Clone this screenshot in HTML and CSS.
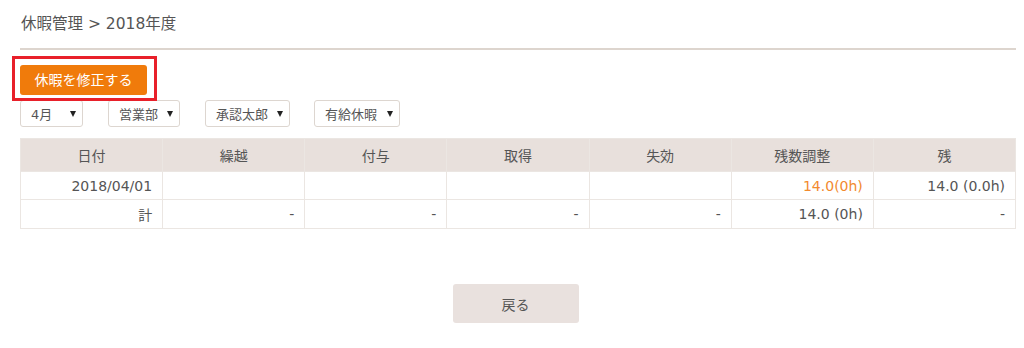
FILE: index.html
```html
<!DOCTYPE html>
<html lang="ja">
<head>
<meta charset="utf-8">
<title>休暇管理</title>
<link rel="stylesheet" href="styles.css">
</head>
<body>
<div class="page">
  <h1 class="title">休暇管理 &gt; 2018年度</h1>
  <div class="toolbar">
    <button class="btn-edit" type="button">休暇を修正する</button>
    <div class="highlight"></div>
  </div>
  <div class="filters">
    <div class="select select-month"><span>4月</span><i class="arrow"></i></div>
    <div class="select select-dept"><span>営業部</span><i class="arrow"></i></div>
    <div class="select select-person"><span>承認太郎</span><i class="arrow"></i></div>
    <div class="select select-type"><span>有給休暇</span><i class="arrow"></i></div>
  </div>
  <table class="grid">
    <thead>
      <tr class="head">
        <th>日付</th><th>繰越</th><th>付与</th><th>取得</th><th>失効</th><th>残数調整</th><th>残</th>
      </tr>
    </thead>
    <tbody>
      <tr class="row1">
        <td>2018/04/01</td><td></td><td></td><td></td><td></td><td class="adj">14.0(0h)</td><td>14.0 (0.0h)</td>
      </tr>
      <tr class="row2">
        <td>計</td><td>-</td><td>-</td><td>-</td><td>-</td><td>14.0 (0h)</td><td>-</td>
      </tr>
    </tbody>
  </table>
  <div class="footer">
    <button class="btn-back" type="button">戻る</button>
  </div>
</div>
</body>
</html>
```

FILE: styles.css
```css
* { box-sizing: border-box; }
html, body { margin: 0; padding: 0; background: #fff; }
body {
  font-family: "DejaVu Sans", "Noto Sans CJK JP", sans-serif;
  color: #555;
}
.page {
  padding: 0 8px 0 20px;
  width: 1024px;
}
.title {
  margin: 0;
  padding: 14px 0 14px 1px;
  font-size: 15.5px;
  font-weight: normal;
  line-height: 20px;
  color: #555;
  border-bottom: 2px solid #ddd5ce;
}
.toolbar {
  position: relative;
  margin-top: 15px;
  height: 30px;
}
.btn-edit {
  display: block;
  width: 127px;
  height: 30px;
  border: 0;
  border-radius: 3px;
  background: #f07b0b;
  color: #fff;
  font-family: inherit;
  font-size: 14px;
  padding: 0;
  line-height: 30px;
}
.highlight {
  position: absolute;
  left: -8px;
  top: -9px;
  width: 145px;
  height: 45px;
  border: 3px solid #e8202a;
}
.filters {
  display: flex;
  gap: 25px;
  margin-top: 5px;
  height: 27px;
}
.select {
  display: flex;
  align-items: center;
  justify-content: space-between;
  height: 27px;
  padding: 0 6px 0 10px;
  border: 1px solid #ddd6d0;
  border-radius: 3px;
  font-size: 13px;
  color: #555;
  background: #fff;
}
.select-month { width: 63px; }
.select-dept { width: 72px; }
.select-person { width: 85px; }
.select-type { width: 86px; margin-left: -1px; }
.arrow {
  display: block;
  width: 0;
  height: 0;
  border-left: 3.5px solid transparent;
  border-right: 3.5px solid transparent;
  border-top: 6px solid #222;
  margin-top: 1px;
}
.grid {
  margin-top: 11px;
  width: 996px;
  border-collapse: collapse;
  table-layout: fixed;
  font-size: 14px;
}
.grid th, .grid td {
  border: 1px solid #ebe6e2;
  padding: 0 10px;
  font-weight: normal;
}
.grid th {
  background: #e8e0dc;
  text-align: center;
  color: #555;
}
.grid td {
  text-align: right;
  color: #555;
}
.head { height: 33px; }
.row1 { height: 28px; }
.row2 { height: 29px; }
.grid td.adj { color: #f28a2e; }
.footer {
  display: flex;
  justify-content: center;
  padding-right: 5px;
  margin-top: 55px;
}
.btn-back {
  width: 126px;
  height: 39px;
  border: 0;
  border-radius: 3px;
  background: #e9e1de;
  color: #555;
  font-family: inherit;
  font-size: 14px;
  padding: 0;
}
```
